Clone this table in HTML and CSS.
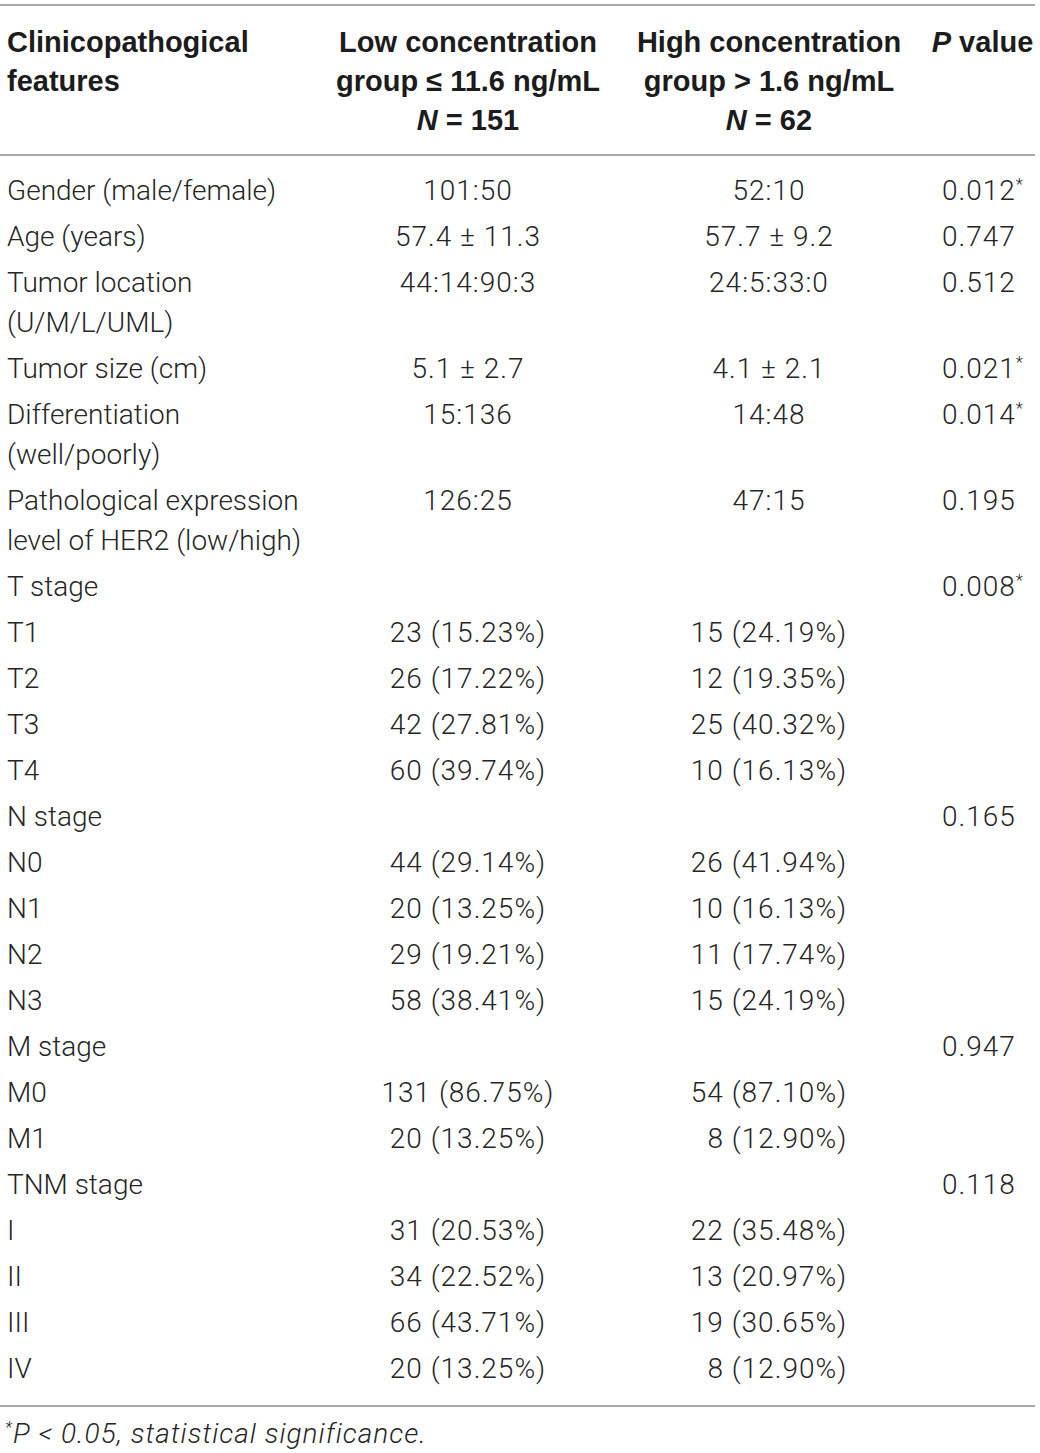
FILE: index.html
```html
<!DOCTYPE html>
<html lang="en">
<head>
    <meta charset="UTF-8">
    <meta name="viewport" content="width=device-width, initial-scale=1.0">
    <title>Clinicopathological features by concentration group</title>
    <link rel="stylesheet" href="styles.css">
</head>
<body>
    <table class="data-table">
        <colgroup>
            <col class="col-feature">
            <col class="col-low">
            <col class="col-high">
            <col class="col-p">
        </colgroup>
        <thead>
            <tr>
                <th class="th-feature">Clinicopathogical<br>features</th>
                <th class="th-group">Low concentration<br>group &le; 11.6 ng/mL<br><i>N</i> = 151</th>
                <th class="th-group">High concentration<br>group &gt; 1.6 ng/mL<br><i>N</i> = 62</th>
                <th class="th-p"><i>P</i> value</th>
            </tr>
        </thead>
        <tbody>
            <tr class="first-row">
                <td>Gender (male/female)</td>
                <td class="num">101:50</td>
                <td class="num">52:10</td>
                <td class="pval">0.012<sup>*</sup></td>
            </tr>
            <tr>
                <td>Age (years)</td>
                <td class="num">57.4 &plusmn; 11.3</td>
                <td class="num">57.7 &plusmn; 9.2</td>
                <td class="pval">0.747</td>
            </tr>
            <tr>
                <td>Tumor location<br>(U/M/L/UML)</td>
                <td class="num">44:14:90:3</td>
                <td class="num">24:5:33:0</td>
                <td class="pval">0.512</td>
            </tr>
            <tr>
                <td>Tumor size (cm)</td>
                <td class="num">5.1 &plusmn; 2.7</td>
                <td class="num">4.1 &plusmn; 2.1</td>
                <td class="pval">0.021<sup>*</sup></td>
            </tr>
            <tr>
                <td>Differentiation<br>(well/poorly)</td>
                <td class="num">15:136</td>
                <td class="num">14:48</td>
                <td class="pval">0.014<sup>*</sup></td>
            </tr>
            <tr>
                <td>Pathological expression<br>level of HER2 (low/high)</td>
                <td class="num">126:25</td>
                <td class="num">47:15</td>
                <td class="pval">0.195</td>
            </tr>
            <tr>
                <td>T stage</td>
                <td class="num"></td>
                <td class="num"></td>
                <td class="pval">0.008<sup>*</sup></td>
            </tr>
            <tr>
                <td>T1</td>
                <td class="num">23 (15.23%)</td>
                <td class="num">15 (24.19%)</td>
                <td class="pval"></td>
            </tr>
            <tr>
                <td>T2</td>
                <td class="num">26 (17.22%)</td>
                <td class="num">12 (19.35%)</td>
                <td class="pval"></td>
            </tr>
            <tr>
                <td>T3</td>
                <td class="num">42 (27.81%)</td>
                <td class="num">25 (40.32%)</td>
                <td class="pval"></td>
            </tr>
            <tr>
                <td>T4</td>
                <td class="num">60 (39.74%)</td>
                <td class="num">10 (16.13%)</td>
                <td class="pval"></td>
            </tr>
            <tr>
                <td>N stage</td>
                <td class="num"></td>
                <td class="num"></td>
                <td class="pval">0.165</td>
            </tr>
            <tr>
                <td>N0</td>
                <td class="num">44 (29.14%)</td>
                <td class="num">26 (41.94%)</td>
                <td class="pval"></td>
            </tr>
            <tr>
                <td>N1</td>
                <td class="num">20 (13.25%)</td>
                <td class="num">10 (16.13%)</td>
                <td class="pval"></td>
            </tr>
            <tr>
                <td>N2</td>
                <td class="num">29 (19.21%)</td>
                <td class="num">11 (17.74%)</td>
                <td class="pval"></td>
            </tr>
            <tr>
                <td>N3</td>
                <td class="num">58 (38.41%)</td>
                <td class="num">15 (24.19%)</td>
                <td class="pval"></td>
            </tr>
            <tr>
                <td>M stage</td>
                <td class="num"></td>
                <td class="num"></td>
                <td class="pval">0.947</td>
            </tr>
            <tr>
                <td>M0</td>
                <td class="num">131 (86.75%)</td>
                <td class="num">54 (87.10%)</td>
                <td class="pval"></td>
            </tr>
            <tr>
                <td>M1</td>
                <td class="num">20 (13.25%)</td>
                <td class="num">&#8199;8 (12.90%)</td>
                <td class="pval"></td>
            </tr>
            <tr>
                <td>TNM stage</td>
                <td class="num"></td>
                <td class="num"></td>
                <td class="pval">0.118</td>
            </tr>
            <tr>
                <td>I</td>
                <td class="num">31 (20.53%)</td>
                <td class="num">22 (35.48%)</td>
                <td class="pval"></td>
            </tr>
            <tr>
                <td>II</td>
                <td class="num">34 (22.52%)</td>
                <td class="num">13 (20.97%)</td>
                <td class="pval"></td>
            </tr>
            <tr>
                <td>III</td>
                <td class="num">66 (43.71%)</td>
                <td class="num">19 (30.65%)</td>
                <td class="pval"></td>
            </tr>
            <tr class="last-row">
                <td>IV</td>
                <td class="num">20 (13.25%)</td>
                <td class="num">&#8199;8 (12.90%)</td>
                <td class="pval"></td>
            </tr>
        </tbody>
    </table>
    <p class="footnote"><sup>*</sup>P &lt; 0.05, statistical significance.</p>
</body>
</html>
```

FILE: styles.css
```css
:root {
    --text-color: #262626;
    --head-color: #1c1c1c;
    --rule-color: #a9a9a9;
}

* {
    margin: 0;
    padding: 0;
    box-sizing: border-box;
}

body {
    font-family: Roboto, 'Liberation Sans', sans-serif;
    font-weight: 300;
    font-size: 28px;
    color: var(--text-color);
    background: white;
    padding-top: 4px;
}

.data-table {
    width: 1035px;
    border-collapse: collapse;
    table-layout: fixed;
}

.col-feature { width: 320px; }
.col-low { width: 296px; }
.col-high { width: 306px; }
.col-p { width: 113px; }

thead tr {
    border-top: 2px solid var(--rule-color);
    border-bottom: 2px solid var(--rule-color);
}

th {
    font-family: 'Liberation Sans', Arial, sans-serif;
    font-weight: 700;
    font-size: 29px;
    line-height: 39px;
    color: var(--head-color);
    padding: 17px 0 14px;
    vertical-align: top;
}

th i {
    font-style: italic;
}

.th-feature {
    text-align: left;
    padding-left: 7px;
}

.th-group {
    text-align: center;
}

.th-p {
    text-align: center;
    padding-left: 8px;
}

td {
    line-height: 40px;
    padding: 3px 0;
    vertical-align: top;
}

td:first-child {
    padding-left: 7px;
}

.num {
    text-align: center;
    letter-spacing: 1px;
}

.pval {
    padding-left: 20px;
    letter-spacing: 1px;
}

sup {
    font-size: 0.6em;
    line-height: 0;
    vertical-align: 0.6em;
}

.first-row td {
    padding-top: 15px;
}

.last-row td {
    padding-bottom: 16px;
}

tbody tr.last-row {
    border-bottom: 2px solid var(--rule-color);
}

.footnote {
    font-style: italic;
    font-size: 28px;
    line-height: 40px;
    letter-spacing: 1px;
    padding: 7px 0 0 5px;
}
```
